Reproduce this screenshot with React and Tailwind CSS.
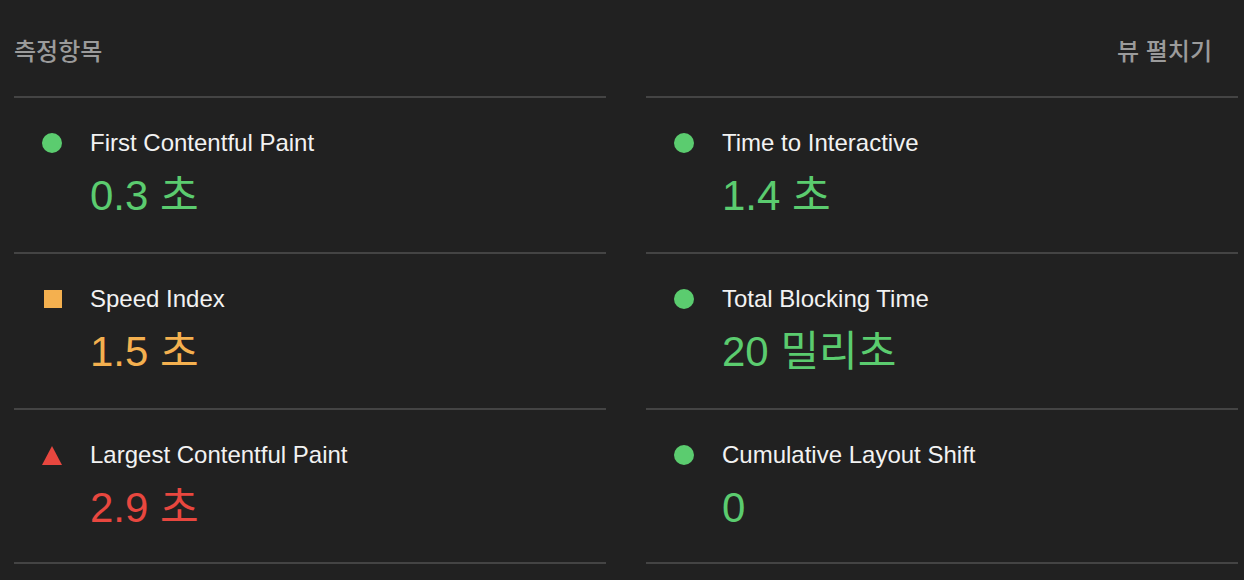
const metrics = [
    { title: "First Contentful Paint", value: "0.3 초", status: "pass" },
    { title: "Time to Interactive", value: "1.4 초", status: "pass" },
    { title: "Speed Index", value: "1.5 초", status: "average" },
    { title: "Total Blocking Time", value: "20 밀리초", status: "pass" },
    { title: "Largest Contentful Paint", value: "2.9 초", status: "fail", last: true },
    { title: "Cumulative Layout Shift", value: "0", status: "pass", last: true },
]

const valueColor = {
    pass: "text-[#5bcc6f]",
    average: "text-[#f4b04f]",
    fail: "text-[#e8473f]",
}

function StatusIcon({ status }) {
    if (status === "average") {
        return <div className="w-[18px] h-[18px] bg-[#f4b04f] ml-[1px]" />
    }
    if (status === "fail") {
        return (
            <svg width="20" height="19" viewBox="0 0 20 19">
                <polygon points="10,0 20,19 0,19" fill="#e8473f" />
            </svg>
        )
    }
    return <div className="w-5 h-5 rounded-full bg-[#5bcc6f]" />
}

function Metric({ title, value, status, last }) {
    return (
        <div
            className={`border-t-2 border-[#444444] pt-[31px] pl-[28px] ${last ? "pb-[30px]" : "pb-[32px]"}`}
        >
            <div className="flex items-center h-[28px]">
                <div className="w-5 flex justify-center">
                    <StatusIcon status={status} />
                </div>
                <div className="ml-[28px] text-[24px] leading-[28px] text-[#f2f2f2]">
                    {title}
                </div>
            </div>
            <div
                className={`mt-[15px] ml-[48px] text-[42px] leading-[48px] ${valueColor[status]}`}
            >
                {value}
            </div>
        </div>
    )
}

export default function App() {
    return (
        <div
            className="min-h-screen bg-[#212121] pl-[14px] pr-[6px]"
            style={{ fontFamily: '"Liberation Sans", "Noto Sans CJK KR", sans-serif' }}
        >
            <div className="flex items-center justify-between h-[96px] pr-[26px] pt-[8px] text-[24px] font-medium text-[#9b9b9b]">
                <span>측정항목</span>
                <span>뷰 펼치기</span>
            </div>
            <div className="grid grid-cols-2 gap-x-10">
                {metrics.map((m) => (
                    <Metric key={m.title} {...m} />
                ))}
                <div className="border-t-2 border-[#444444]" />
                <div className="border-t-2 border-[#444444]" />
            </div>
        </div>
    )
}
